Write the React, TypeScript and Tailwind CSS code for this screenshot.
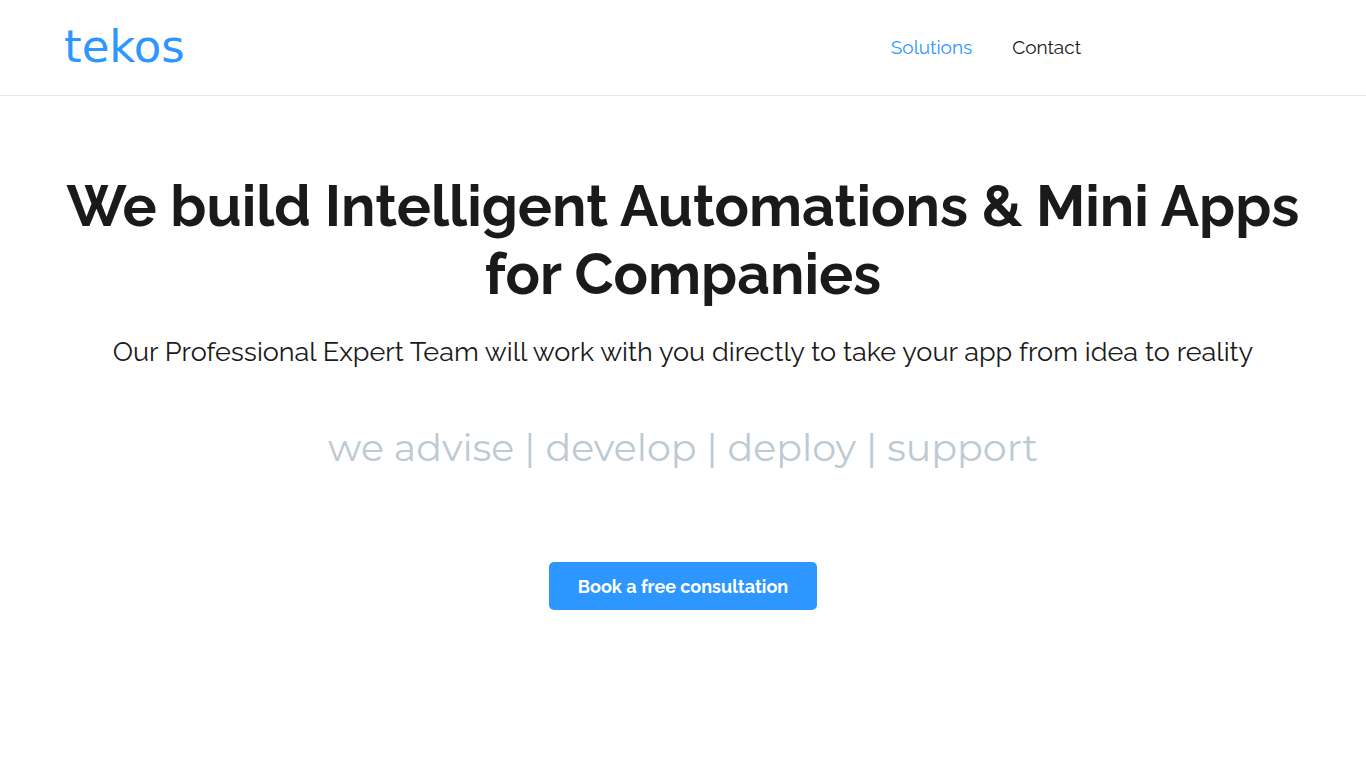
export default function App() {
  return (
    <div className="min-h-screen bg-white font-['Raleway','Lato','Open_Sans',sans-serif] text-[#1a1a1a]">
      <header className="flex h-24 items-center justify-between border-b border-[#e6e6e6] px-16 pb-0.5">
        <a href="#" className="font-['DejaVu_Sans',sans-serif] text-[45px] leading-none text-[#2d96ff]">
          tekos
        </a>
        <nav className="mr-[221px] flex gap-10 text-[19px] leading-6">
          <a href="#solutions" className="text-[#2d96ff]">Solutions</a>
          <a href="#contact">Contact</a>
        </nav>
      </header>
      <main className="flex flex-col items-center px-16 pt-19 text-center">
        <h1 className="text-[57px] leading-[68px] font-bold">
          We build Intelligent Automations &amp; Mini Apps for Companies
        </h1>
        <p className="mt-6 text-[27px] leading-10">
          Our Professional Expert Team will work with you directly to take your app from idea to reality
        </p>
        <p className="mt-13 font-['Montserrat','Open_Sans',sans-serif] text-[38px] leading-12 text-[#bccad3]">
          we advise | develop | deploy | support
        </p>
        <button type="button" className="mt-[90px] h-12 rounded-[5px] bg-[#2d96ff] px-[29px] text-[18px] font-bold text-white">
          Book a free consultation
        </button>
      </main>
    </div>
  );
}
